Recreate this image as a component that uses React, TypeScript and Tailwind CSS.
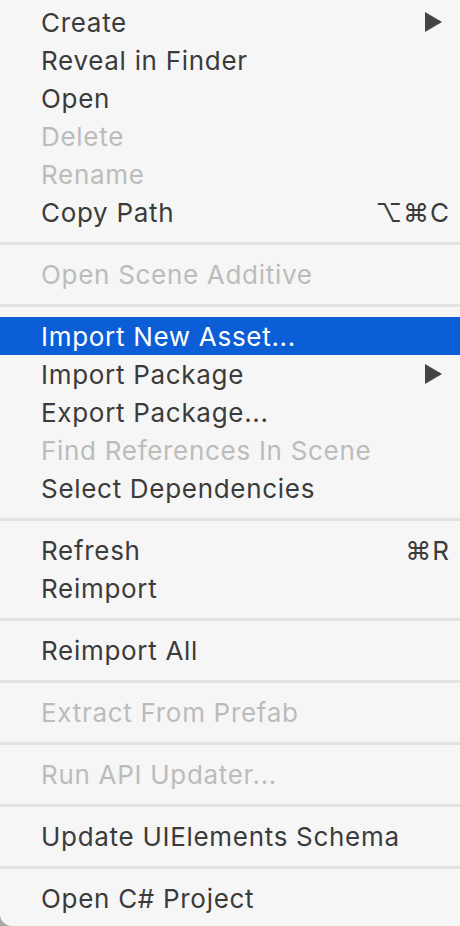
import React from "react";

type Item =
  | { type: "sep" }
  | { type: "item"; label: string; disabled?: boolean; highlight?: boolean; shortcut?: string; arrow?: boolean };

const items: Item[] = [
  { type: "item", label: "Create", arrow: true },
  { type: "item", label: "Reveal in Finder" },
  { type: "item", label: "Open" },
  { type: "item", label: "Delete", disabled: true },
  { type: "item", label: "Rename", disabled: true },
  { type: "item", label: "Copy Path", shortcut: "⌥⌘C" },
  { type: "sep" },
  { type: "item", label: "Open Scene Additive", disabled: true },
  { type: "sep" },
  { type: "item", label: "Import New Asset...", highlight: true },
  { type: "item", label: "Import Package", arrow: true },
  { type: "item", label: "Export Package..." },
  { type: "item", label: "Find References In Scene", disabled: true },
  { type: "item", label: "Select Dependencies" },
  { type: "sep" },
  { type: "item", label: "Refresh", shortcut: "⌘R" },
  { type: "item", label: "Reimport" },
  { type: "sep" },
  { type: "item", label: "Reimport All" },
  { type: "sep" },
  { type: "item", label: "Extract From Prefab", disabled: true },
  { type: "sep" },
  { type: "item", label: "Run API Updater...", disabled: true },
  { type: "sep" },
  { type: "item", label: "Update UIElements Schema" },
  { type: "sep" },
  { type: "item", label: "Open C# Project" },
];

function Arrow({ white }: { white?: boolean }) {
  return (
    <svg width="18" height="20" viewBox="0 0 18 20" className="mr-[17px]">
      <polygon points="0,0 17,10 0,20" fill={white ? "#ffffff" : "#444444"} />
    </svg>
  );
}

export default function App() {
  return (
    <div className="w-[460px] h-[926px] bg-[#a8a8a8] overflow-hidden">
      <div
        className="w-[460px] h-[926px] bg-[#f6f6f6] rounded-bl-[12px] pt-[3px] text-[26px]"
        style={{ fontFamily: "Inter, 'Noto Sans', 'DejaVu Sans', sans-serif" }}
      >
        {items.map((it, i) => {
          if (it.type === "sep") {
            return (
              <div key={i} className="h-[24px] flex items-center">
                <div className="w-full h-[3px] bg-[#e3e3e3]" />
              </div>
            );
          }
          const color = it.highlight ? "text-white" : it.disabled ? "text-[#bcbcbc]" : "text-[#3b3b3b]";
          return (
            <div
              key={i}
              className={`h-[38px] flex items-center justify-between pl-[41px] ${it.highlight ? "bg-[#0c5ed7]" : ""} ${color}`}
            >
              <span className="leading-none tracking-[0.7px] pt-[2px]">{it.label}</span>
              {it.arrow && <Arrow white={it.highlight} />}
              {it.shortcut && <span className="leading-none mr-[10px] tracking-[1px] pt-[2px]">{it.shortcut}</span>}
            </div>
          );
        })}
      </div>
    </div>
  );
}
